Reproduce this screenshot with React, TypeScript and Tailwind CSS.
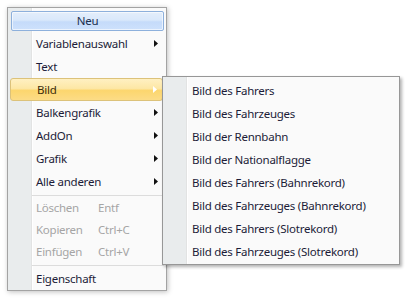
import React from 'react';

type Item =
  | { kind: 'item'; label: string; submenu?: boolean; active?: boolean; disabled?: boolean; shortcut?: string }
  | { kind: 'sep' };

const mainItems: Item[] = [
  { kind: 'item', label: 'Variablenauswahl', submenu: true },
  { kind: 'item', label: 'Text' },
  { kind: 'item', label: 'Bild', submenu: true, active: true },
  { kind: 'item', label: 'Balkengrafik', submenu: true },
  { kind: 'item', label: 'AddOn', submenu: true },
  { kind: 'item', label: 'Grafik', submenu: true },
  { kind: 'item', label: 'Alle anderen', submenu: true },
  { kind: 'sep' },
  { kind: 'item', label: 'Löschen', disabled: true, shortcut: 'Entf' },
  { kind: 'item', label: 'Kopieren', disabled: true, shortcut: 'Ctrl+C' },
  { kind: 'item', label: 'Einfügen', disabled: true, shortcut: 'Ctrl+V' },
  { kind: 'sep' },
  { kind: 'item', label: 'Eigenschaft' },
];

const subItems = [
  'Bild des Fahrers',
  'Bild des Fahrzeuges',
  'Bild der Rennbahn',
  'Bild der Nationalflagge',
  'Bild des Fahrers (Bahnrekord)',
  'Bild des Fahrzeuges (Bahnrekord)',
  'Bild des Fahrers (Slotrekord)',
  'Bild des Fahrzeuges (Slotrekord)',
];

const Arrow = ({ color }: { color: string }) => (
  <svg width="4" height="7" viewBox="0 0 4 7" className="shrink-0">
    <path d="M0 0 L4 3.5 L0 7 Z" fill={color} />
  </svg>
);

const App: React.FC = () => {
  return (
    <div className="relative w-[410px] h-[302px] bg-white overflow-hidden font-['Noto_Sans',sans-serif] text-[11.5px] tracking-[-0.25px] leading-none">
      {/* Main menu */}
      <div className="ml-[7px] mt-[7px] w-[160px] h-[284px] border border-[#a3a3a3] shadow-[1px_1px_5px_rgba(0,0,0,0.25)] bg-[linear-gradient(to_right,#e9eced_0,#e9eced_23px,#e2e3e3_23px,#e2e3e3_24px,#ffffff_24px,#ffffff_25px,#fafafa_25px)] flex flex-col">
        {/* Header */}
        <div className="ml-[3px] mr-[2px] mt-[3px] h-[20px] rounded-[2px] border border-[#8db0dc] bg-[linear-gradient(to_bottom,#e4eefb_0%,#d9e8fb_45%,#c5dbfa_55%,#cde1fc_100%)] shadow-[inset_0_0_0_1px_rgba(255,255,255,0.6)] flex items-center justify-center text-[#1a2f4f]">
          Neu
        </div>
        <div className="h-[1px]" />
        {mainItems.map((it, i) =>
          it.kind === 'sep' ? (
            <div key={i} className="h-[4px] flex items-center pl-[24px] pr-[2px]">
              <div className="h-[1px] w-full bg-[#dcdcdc]" />
            </div>
          ) : (
            <div
              key={i}
              className={`ml-[2px] mr-[3px] flex items-center pl-[26px] pr-[5px] ${
                it.disabled ? 'h-[22px]' : 'h-[23px]'
              } ${
                it.active
                  ? 'rounded-[3px] border border-[#dcc27a] bg-[linear-gradient(to_bottom,#fff0c2_0%,#fde7a5_45%,#fcd66e_55%,#fcdc86_100%)] text-[#3a2c0c] pl-[25px] pr-[4px]'
                  : it.disabled
                  ? 'text-[#a5a5a5]'
                  : 'text-[#1c1c38]'
              }`}
            >
              {it.shortcut ? (
                <>
                  <span className="w-[62px]">{it.label}</span>
                  <span>{it.shortcut}</span>
                </>
              ) : (
                <span className="flex-1">{it.label}</span>
              )}
              {it.submenu && <Arrow color={it.active ? '#ffffff' : '#111111'} />}
            </div>
          )
        )}
      </div>

      {/* Submenu */}
      <div className="absolute left-[162px] top-[76px] w-[238px] h-[189px] border border-[#979797] shadow-[2px_2px_3px_rgba(0,0,0,0.3)] bg-[linear-gradient(to_right,#e9eced_0,#e9eced_23px,#e2e3e3_23px,#e2e3e3_24px,#ffffff_24px,#ffffff_25px,#fafafa_25px)] pt-[2px] flex flex-col">
        {subItems.map((s) => (
          <div key={s} className="h-[23px] ml-[2px] flex items-center pl-[27px] text-[#1c1c38]">
            {s}
          </div>
        ))}
      </div>
    </div>
  );
};

export default App;
